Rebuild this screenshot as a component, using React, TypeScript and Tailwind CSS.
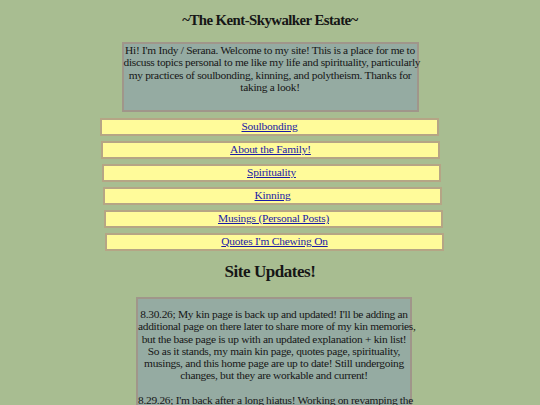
import React from "react";

const links = [
  "Soulbonding",
  "About the Family!",
  "Spirituality",
  "Kinning",
  "Musings (Personal Posts)",
  "Quotes I'm Chewing On",
];
const offsets = ["ml-[100px]", "ml-[101px]", "ml-[102px]", "ml-[103px]", "ml-[104px]", "ml-[105px]"];

export default function App() {
  return (
    <div
      className="w-[540px] h-[405px] overflow-hidden bg-[#a8bd91] text-[#161616] text-[11.4px] leading-[12.3px] tracking-[-0.28px]"
      style={{ fontFamily: '"Liberation Serif", "Times New Roman", serif' }}
    >
      <h1 className="pt-[12px] text-center text-[14.8px] leading-[17px] font-bold tracking-[-0.55px]">
        ~The Kent-Skywalker Estate~
      </h1>
      <div className="mx-auto mt-[13px] w-[297px] h-[70px] border-2 border-[#a0968a] bg-[#95aba2] pt-0 text-center whitespace-nowrap">
        Hi! I'm Indy / Serana. Welcome to my site! This is a place for me to
        <br />
        discuss topics personal to me like my life and spirituality, particularly
        <br />
        my practices of soulbonding, kinning, and polytheism. Thanks for
        <br />
        taking a look!
      </div>
      <div className="mt-[6px] flex flex-col gap-[5px]">
        {links.map((l, i) => (
          <div
            key={l}
            className={`${offsets[i]} w-[339px] h-[18px] border-2 border-[#b5a585] bg-[#fffb9a] text-center leading-[12px]`}
          >
            <a href="#" className="text-[#1a1aa6] underline tracking-[-0.2px]">
              {l}
            </a>
          </div>
        ))}
      </div>
      <h2 className="mt-[10px] text-center text-[17px] leading-[22px] font-bold tracking-[-0.45px]">Site Updates!</h2>
      <div className="ml-[136px] mt-[14px] w-[276px] border-2 border-[#a0968a] bg-[#95aba2] pt-[9px] text-center whitespace-nowrap">
        <p>
          8.30.26; My kin page is back up and updated! I'll be adding an
          <br />
          additional page on there later to share more of my kin memories,
          <br />
          but the base page is up with an updated explanation + kin list!
          <br />
          So as it stands, my main kin page, quotes page, spirituality,
          <br />
          musings, and this home page are up to date! Still undergoing
          <br />
          changes, but they are workable and current!
        </p>
        <p className="mt-[12px]">
          8.29.26; I'm back after a long hiatus! Working on revamping the
          <br />
          whole site since it's been a while and what I've learned of late
          <br />
          has changed a lot.
        </p>
      </div>
    </div>
  );
}
